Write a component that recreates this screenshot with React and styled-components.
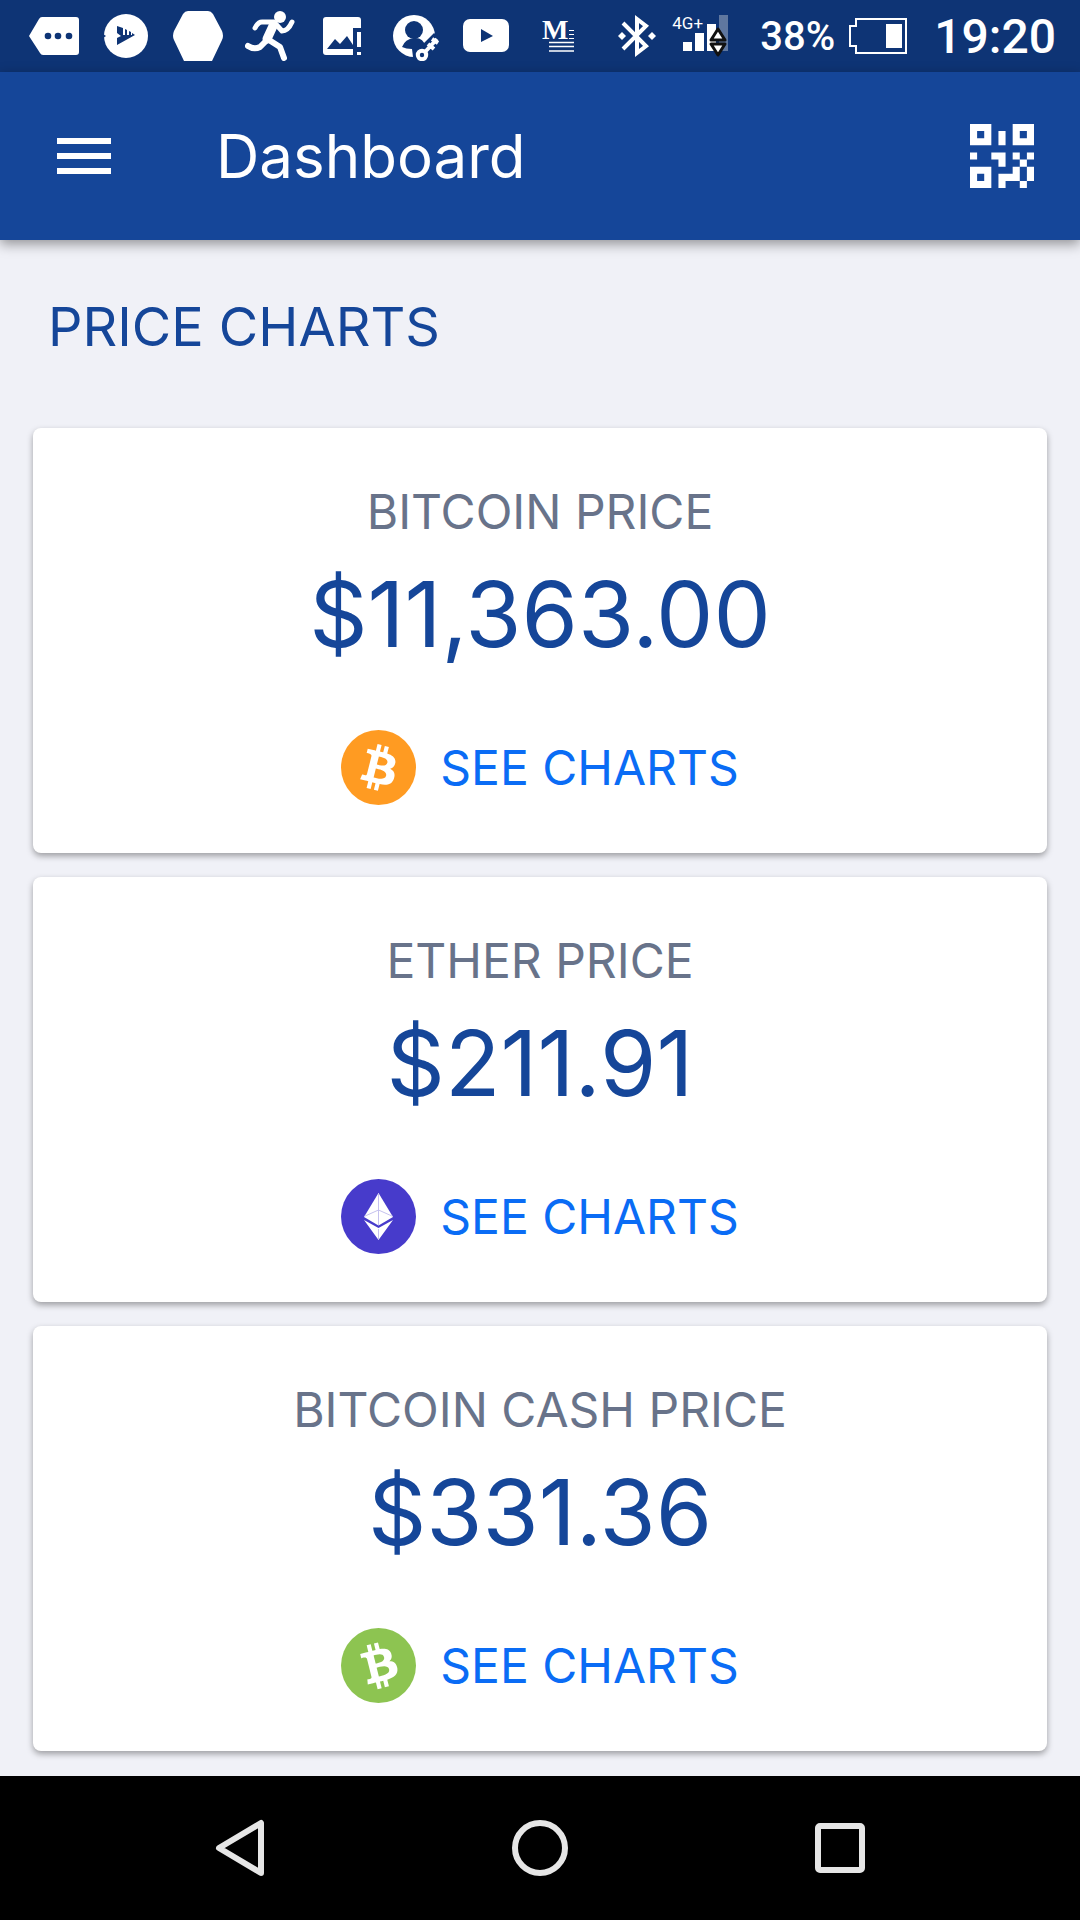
import React from 'react';
import styled, { createGlobalStyle } from 'styled-components';

const coins = [
  { id: 'btc', name: 'Bitcoin Price', price: '$11,363.00' },
  { id: 'eth', name: 'Ether Price', price: '$211.91' },
  { id: 'bch', name: 'Bitcoin Cash Price', price: '$331.36' },
];

const BitcoinSign = () => (
  <path
    fill="#fff"
    d="M23.189 14.02c.314-2.096-1.283-3.223-3.465-3.975l.708-2.84-1.728-.43-.69 2.765c-.454-.114-.92-.22-1.385-.326l.695-2.783L15.596 6l-.708 2.839c-.376-.086-.746-.17-1.104-.26l.002-.009-2.384-.595-.46 1.846s1.283.294 1.256.312c.7.175.826.638.805 1.006l-.806 3.235c.048.012.11.03.18.057l-.183-.045-1.13 4.532c-.086.212-.303.531-.793.41.018.025-1.256-.313-1.256-.313l-.858 1.978 2.25.561c.418.105.828.215 1.231.318l-.715 2.872 1.727.43.708-2.84c.472.127.93.245 1.378.357l-.706 2.828 1.728.43.715-2.866c2.948.558 5.164.333 6.097-2.333.752-2.146-.037-3.385-1.588-4.192 1.13-.26 1.98-1.003 2.207-2.538zm-3.95 5.538c-.533 2.147-4.148.986-5.32.695l.95-3.805c1.172.293 4.929.872 4.37 3.11zm.535-5.569c-.487 1.953-3.495.96-4.47.717l.86-3.45c.975.243 4.118.696 3.61 2.733z"
  />
);

const CoinLogo = ({ id }) => {
  if (id === 'eth') {
    return (
      <Logo viewBox="0 0 75 75" aria-hidden="true">
        <circle cx="37.5" cy="37.5" r="37.5" fill="#473bcb" />
        <path d="M37.500 14 52 38 37.500 46.500 23 38Z" fill="#fff" />
        <path d="M23 41 37.500 49 52 41 37.500 61Z" fill="#fff" />
        <path d="M37.500 14V46M37.500 50V61M23 37.500 37.500 31 52 37.500" stroke="#c5c1ee" fill="none" />
      </Logo>
    );
  }
  return (
    <Logo viewBox="0 0 32 32" aria-hidden="true">
      <circle cx="16" cy="16" r="16" fill={id === 'btc' ? '#ff9b22' : '#8dc451'} />
      <g transform={id === 'bch' ? 'rotate(-28 16 16)' : undefined}>
        <BitcoinSign />
      </g>
    </Logo>
  );
};

const App = () => {
  return (
    <>
      <GlobalStyle />
      <Screen>
        <StatusBar>
          <Notifications aria-hidden="true">
            <svg width="50" height="50" viewBox="0 0 50 50">
              <path d="M13 6H47Q50 6 50 9V41Q50 44 47 44H14Q12 44 11 42L0 25 10 8Q11 6 13 6Z" fill="#fff" />
              <circle cx="19" cy="25" r="3.300" fill="#0e3475" />
              <circle cx="29" cy="25" r="3.300" fill="#0e3475" />
              <circle cx="40" cy="25" r="3.300" fill="#0e3475" />
            </svg>
            <svg width="50" height="50" viewBox="0 0 50 50">
              <circle cx="25" cy="25" r="22" fill="#fff" />
              <path d="M16 15 22 17V24H24V18L26 19V24H28V20L30 21V24H31V22L34 24 16 34V27L20 25 16 22Z" fill="#0e3475" />
              <path d="M2 23 5 25 2 27Z" fill="#0e3475" />
            </svg>
            <svg width="50" height="50" viewBox="0 0 50 50">
              <path d="M15 0H35Q38 0 40 3L49 20Q51 25 49 29L39 50H11L1 29Q-1 25 1 20L10 3Q12 0 15 0Z" fill="#fff" />
            </svg>
            <svg width="50" height="50" viewBox="0 0 50 50" fill="none" stroke="#fff" strokeLinecap="round" strokeLinejoin="round">
              <circle cx="35" cy="6" r="6" fill="#fff" stroke="none" />
              <path d="M10 17Q13 11 17 11L29 11 37 20Q43 20 47 11" strokeWidth="5" />
              <path d="M28 15 22 28" strokeWidth="9" />
              <path d="M21 30 15 36Q9 39 3 35M24 29 35 36 39 47" strokeWidth="6" />
            </svg>
            <svg width="50" height="50" viewBox="0 0 50 50">
              <path d="M9 6H41Q44 6 44 9V17H36V44H9Q6 44 6 41V9Q6 6 9 6Z" fill="#fff" />
              <path d="M10 38 18 28 23 33 30 25 36 34V38Z" fill="#0e3475" />
              <path d="M40 21H44V36H40ZM40 41H44V44H40Z" fill="#fff" />
            </svg>
            <svg width="50" height="50" viewBox="0 0 50 50">
              <circle cx="25" cy="25" r="21" fill="#fff" />
              <circle cx="25" cy="19" r="9" fill="#0e3475" />
              <path d="M13 36Q16 28 25 27T37 36L32 46 24 46 23 38Q17 38 13 36Z" fill="#0e3475" />
              <path d="M33 44 50 27" stroke="#0e3475" strokeWidth="14" />
              <circle cx="33" cy="44" r="8" fill="#0e3475" />
              <circle cx="33" cy="44" r="4.200" stroke="#fff" strokeWidth="4" fill="none" />
              <path d="M36 41 48 28M39 33 45 38M43 28 49 32" stroke="#fff" strokeWidth="4" />
            </svg>
            <svg width="50" height="50" viewBox="0 0 50 50">
              <rect x="2" y="8" width="46" height="33" rx="7" fill="#fff" />
              <path d="M20 18 32 25 20 31Z" fill="#0e3475" />
            </svg>
            <svg width="50" height="50" viewBox="0 0 50 50" stroke="#fff">
              <MediumLetter x="9" y="28">M</MediumLetter>
              <path d="M36 19.500H41M36 23.500H41M36 27.500H41" />
              <path d="M16 31.500H41M16 35.500H41M16 40H41" strokeWidth="1.500" />
            </svg>
          </Notifications>
          <Indicators>
            <svg width="38" height="44" viewBox="0 0 38 44" fill="none" stroke="#fff" strokeWidth="4" aria-hidden="true">
              <path d="M5 9 28 32 19 39V5L28 12 5 35" />
              <path d="M4 18 8 22 4 26 0 22ZM34 18 38 22 34 26 30 22Z" fill="#fff" stroke="none" />
            </svg>
            <Signal>
              <span>4G+</span>
              <svg width="56" height="46" viewBox="0 0 56 46" aria-hidden="true">
                <path d="M47 2H56V38H47Z" fill="#5f779f" />
                <path d="M11 29H20V38H11ZM23 20H32V38H23ZM35 11H44V38H35Z" fill="#fff" />
                <path d="M46 16 53 27H39ZM46 42 53 31H39Z" fill="#fff" stroke="#111" strokeWidth="3" strokeLinejoin="round" />
              </svg>
            </Signal>
            <Percent>38%</Percent>
            <svg width="58" height="36" viewBox="0 0 58 36" aria-hidden="true">
              <path d="M7 1H57V35H7V28H1V8H7Z" fill="none" stroke="#fff" strokeWidth="2" />
              <rect x="37" y="6" width="16" height="24" fill="#fff" />
            </svg>
            <Clock>19:20</Clock>
          </Indicators>
        </StatusBar>

        <Toolbar>
          <IconButton aria-label="Menu">
            <svg width="54" height="36" viewBox="0 0 54 36" fill="#fff">
              <path d="M0 0H54V6H0ZM0 15H54V21H0ZM0 30H54V36H0Z" />
            </svg>
          </IconButton>
          <Title>Dashboard</Title>
          <IconButton aria-label="Scan QR code">
            <svg width="64" height="64" viewBox="0 0 9 9" fill="#fff">
              <path fillRule="evenodd" d="M0 0H3V3H0ZM1 1V2H2V1ZM6 0H9V3H6ZM7 1V2H8V1ZM0 6H3V9H0ZM1 7V8H2V7Z" />
              <path d="M4 1H5V3H4ZM0 4H1V5H0ZM3 4H5V6H4V5H3ZM6 4H7V5H6ZM8 4H9V5H8ZM7 5H8V6H7ZM6 6H7V8H5V9H4V7H6ZM8 6H9V8H8ZM7 8H8V9H7Z" />
            </svg>
          </IconButton>
        </Toolbar>

        <Content>
          <SectionTitle>Price charts</SectionTitle>
          <CardList>
            {coins.map((coin) => (
              <Card key={coin.id}>
                <CoinName>{coin.name}</CoinName>
                <Price>{coin.price}</Price>
                <ChartLink href={`#${coin.id}`}>
                  <CoinLogo id={coin.id} />
                  See charts
                </ChartLink>
              </Card>
            ))}
          </CardList>
        </Content>

        <NavBar>
          <NavButton aria-label="Back">
            <svg width="60" height="60" viewBox="0 0 60 60">
              <path d="M51 5V55L9 30Z" />
            </svg>
          </NavButton>
          <NavButton aria-label="Home">
            <svg width="60" height="60" viewBox="0 0 60 60">
              <circle cx="30" cy="30" r="25" />
            </svg>
          </NavButton>
          <NavButton aria-label="Recent apps">
            <svg width="60" height="60" viewBox="0 0 60 60">
              <rect x="8" y="8" width="44" height="44" rx="2" />
            </svg>
          </NavButton>
        </NavBar>
      </Screen>
    </>
  );
};

export default App;

const GlobalStyle = createGlobalStyle`
  * {
    box-sizing: border-box;
  }

  body {
    margin: 0;
    background-color: #f0f1f7;
    font-family: Inter, sans-serif;
  }
`;

const Screen = styled.div`
  min-height: 100vh;
  display: flex;
  flex-direction: column;
`;

const StatusBar = styled.div`
  height: 72px;
  display: flex;
  align-items: center;
  justify-content: space-between;
  padding: 0 24px 0 29px;
  background-color: #0e3475;
  color: #fff;
  font-family: Roboto, sans-serif;
  font-weight: 500;
`;

const Notifications = styled.div`
  display: flex;
  align-items: center;
  gap: 22px;
`;

const MediumLetter = styled.text`
  fill: #fff;
  stroke: none;
  font: bold 28px 'Liberation Serif', serif;
`;

const Indicators = styled.div`
  display: flex;
  align-items: center;
`;

const Signal = styled.div`
  position: relative;
  width: 56px;
  height: 46px;
  margin: 0 32px 0 16px;

  span {
    position: absolute;
    left: 0;
    top: 0;
    font: 17px Roboto, sans-serif;
  }
`;

const Percent = styled.span`
  margin-right: 14px;
  font-size: 40px;
`;

const Clock = styled.span`
  margin-left: 27px;
  font-size: 48px;
`;

const Toolbar = styled.header`
  height: 168px;
  display: flex;
  align-items: center;
  padding: 0 46px 0 57px;
  background-color: #154699;
  box-shadow: 0 4px 12px rgba(0, 0, 0, 0.4);
`;

const IconButton = styled.button`
  display: flex;
  padding: 0;
  border: none;
  background: none;
  cursor: pointer;
`;

const Title = styled.h1`
  flex: 1;
  margin: 0 0 0 105px;
  color: #fff;
  font-size: 60px;
  line-height: 72px;
  font-weight: 400;
`;

const Content = styled.main`
  flex: 1;
  padding: 48px 33px 24px;
`;

const SectionTitle = styled.h2`
  margin: 0 15px 62px;
  color: #154699;
  font-size: 54px;
  line-height: 78px;
  font-weight: 400;
  text-transform: uppercase;
`;

const CardList = styled.div`
  display: grid;
  gap: 24px;
`;

const Card = styled.section`
  display: flex;
  flex-direction: column;
  align-items: center;
  padding: 54px 24px 48px;
  border-radius: 8px;
  background-color: #fff;
  box-shadow: 0 3px 6px rgba(0, 0, 0, 0.35);
`;

const CoinName = styled.h3`
  margin: 0;
  color: #68738a;
  font-size: 48px;
  line-height: 60px;
  font-weight: 400;
  text-transform: uppercase;
`;

const Price = styled.p`
  margin: 18px 0 62px;
  color: #154699;
  font-size: 91px;
  line-height: 108px;
`;

const ChartLink = styled.a`
  display: flex;
  align-items: center;
  gap: 24px;
  color: #0a6cf5;
  font-size: 48px;
  line-height: 72px;
  text-decoration: none;
  text-transform: uppercase;
`;

const Logo = styled.svg`
  width: 75px;
  height: 75px;
`;

const NavBar = styled.nav`
  height: 144px;
  display: flex;
  align-items: center;
  justify-content: center;
  gap: 240px;
  background-color: #000;
`;

const NavButton = styled.button`
  display: flex;
  padding: 0;
  border: none;
  background: none;
  cursor: pointer;

  svg {
    fill: none;
    stroke: #e6e6e6;
    stroke-width: 6px;
    stroke-linejoin: round;
  }
`;
